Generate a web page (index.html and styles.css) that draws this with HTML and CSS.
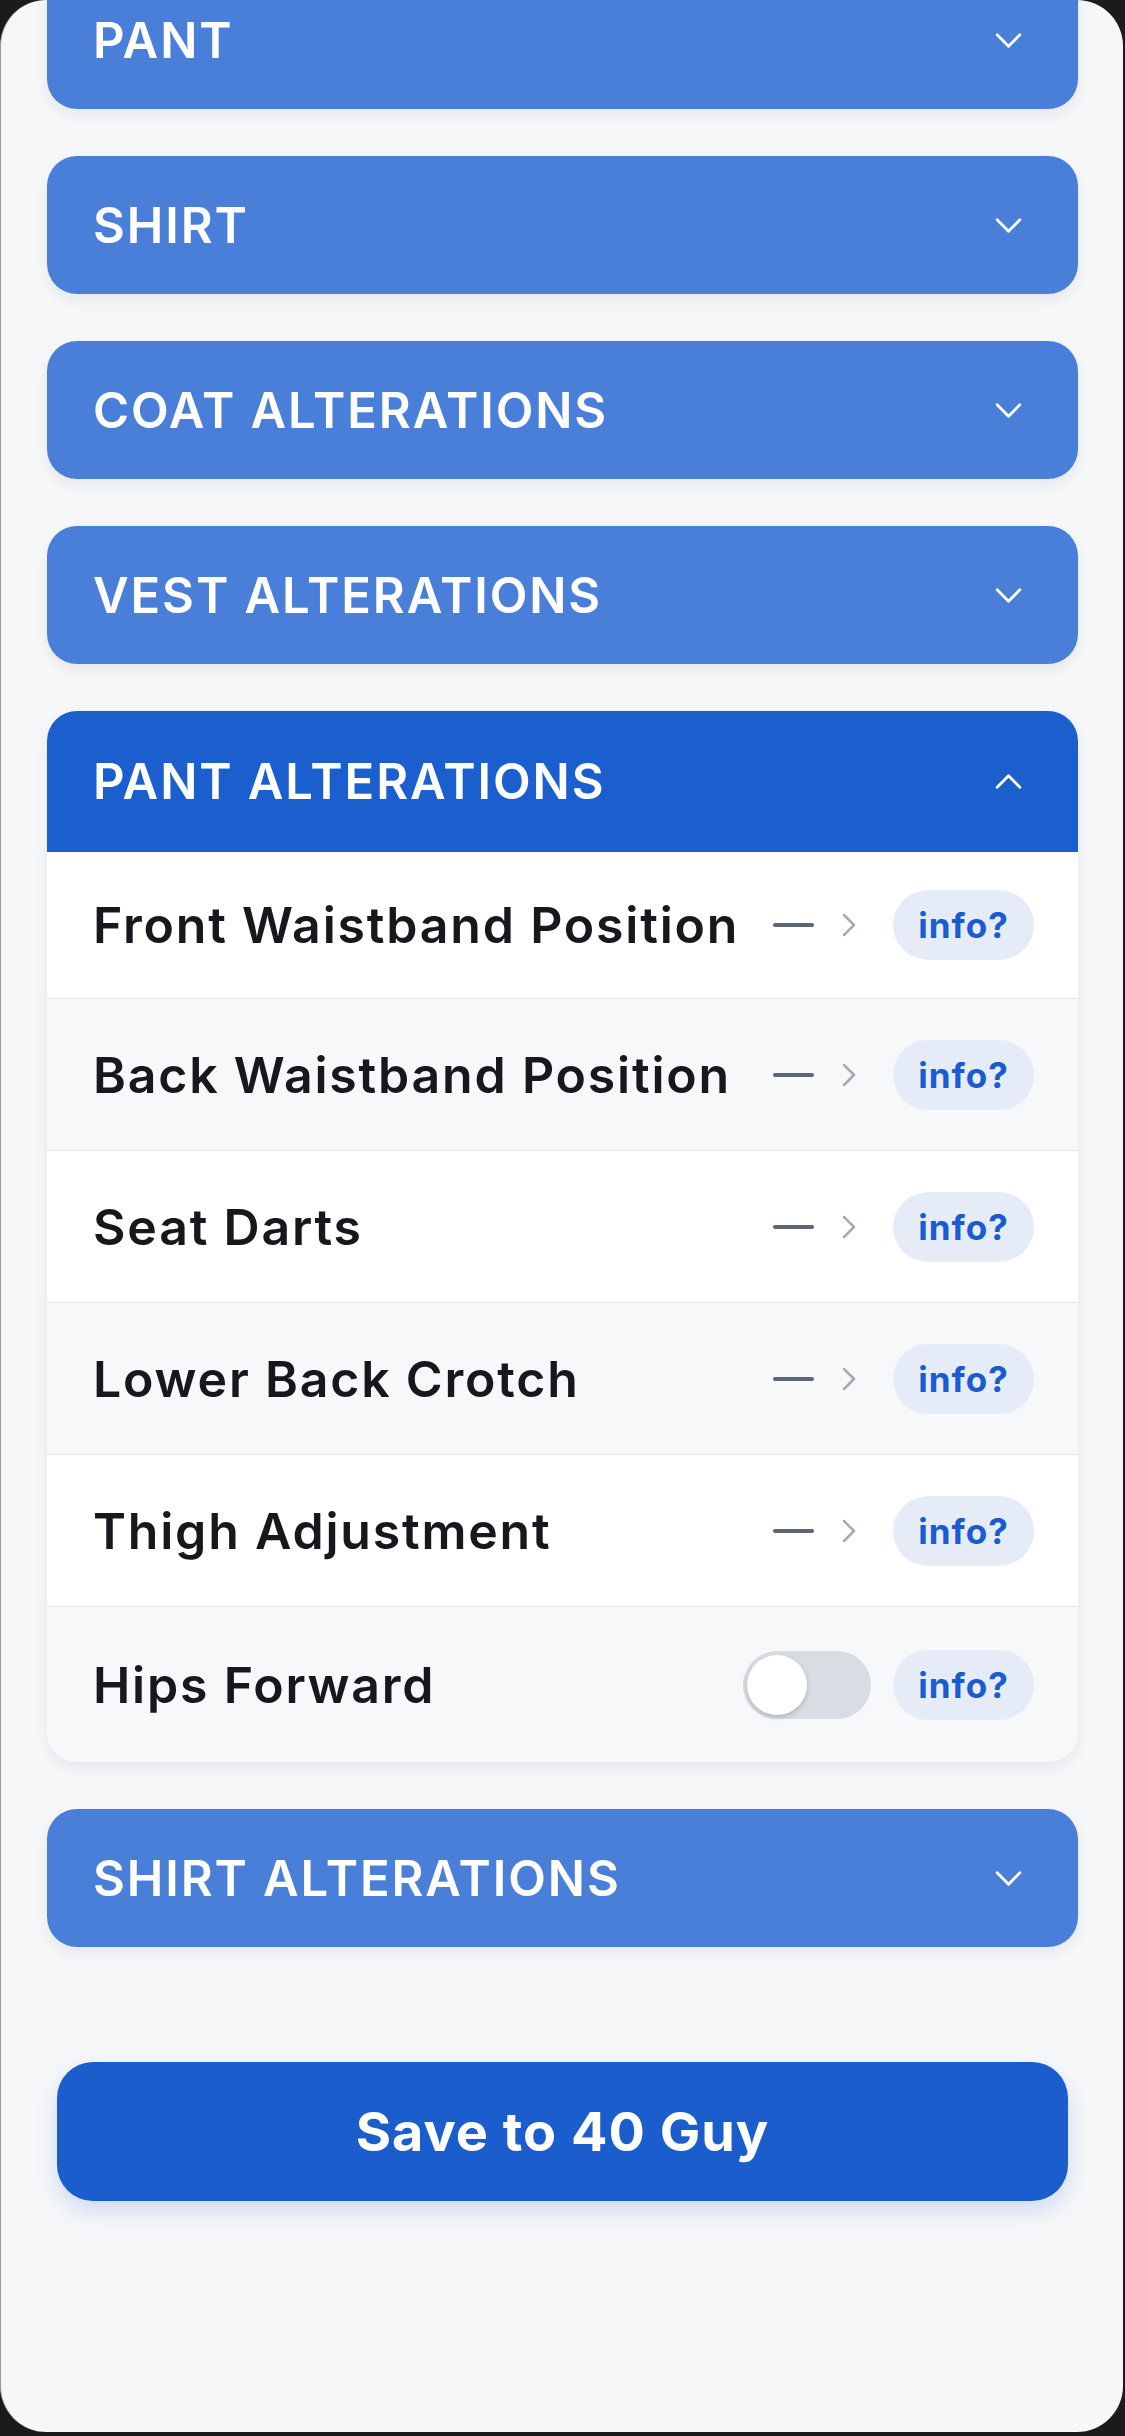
FILE: index.html
```html
<!DOCTYPE html>
<html>
  <head>
    <title>Alterations</title>
    <link rel="stylesheet" href="styles.css">
  </head>
  <body>
    <div class="screen">
      <div class="content">
        <section class="group">
          <header class="group-head">
            <span>PANT</span>
            <svg class="caret" viewBox="0 0 30 18"><polyline points="3,3 15,15 27,3" /></svg>
          </header>
        </section>

        <section class="group">
          <header class="group-head">
            <span>SHIRT</span>
            <svg class="caret" viewBox="0 0 30 18"><polyline points="3,3 15,15 27,3" /></svg>
          </header>
        </section>

        <section class="group">
          <header class="group-head">
            <span>COAT ALTERATIONS</span>
            <svg class="caret" viewBox="0 0 30 18"><polyline points="3,3 15,15 27,3" /></svg>
          </header>
        </section>

        <section class="group">
          <header class="group-head">
            <span>VEST ALTERATIONS</span>
            <svg class="caret" viewBox="0 0 30 18"><polyline points="3,3 15,15 27,3" /></svg>
          </header>
        </section>

        <section class="group open">
          <header class="group-head">
            <span>PANT ALTERATIONS</span>
            <svg class="caret" viewBox="0 0 30 18"><polyline points="3,15 15,3 27,15" /></svg>
          </header>

          <div class="row">
            <span class="row-label">Front Waistband Position</span>
            <span class="row-value">
              <span class="dash"></span>
              <svg class="next" viewBox="0 0 14 24"><polyline points="2,2 12,12 2,22" /></svg>
            </span>
            <button class="info">info?</button>
          </div>

          <div class="row">
            <span class="row-label">Back Waistband Position</span>
            <span class="row-value">
              <span class="dash"></span>
              <svg class="next" viewBox="0 0 14 24"><polyline points="2,2 12,12 2,22" /></svg>
            </span>
            <button class="info">info?</button>
          </div>

          <div class="row">
            <span class="row-label">Seat Darts</span>
            <span class="row-value">
              <span class="dash"></span>
              <svg class="next" viewBox="0 0 14 24"><polyline points="2,2 12,12 2,22" /></svg>
            </span>
            <button class="info">info?</button>
          </div>

          <div class="row">
            <span class="row-label">Lower Back Crotch</span>
            <span class="row-value">
              <span class="dash"></span>
              <svg class="next" viewBox="0 0 14 24"><polyline points="2,2 12,12 2,22" /></svg>
            </span>
            <button class="info">info?</button>
          </div>

          <div class="row">
            <span class="row-label">Thigh Adjustment</span>
            <span class="row-value">
              <span class="dash"></span>
              <svg class="next" viewBox="0 0 14 24"><polyline points="2,2 12,12 2,22" /></svg>
            </span>
            <button class="info">info?</button>
          </div>

          <div class="row">
            <span class="row-label">Hips Forward</span>
            <span class="toggle"><span class="knob"></span></span>
            <button class="info">info?</button>
          </div>
        </section>

        <section class="group">
          <header class="group-head">
            <span>SHIRT ALTERATIONS</span>
            <svg class="caret" viewBox="0 0 30 18"><polyline points="3,3 15,15 27,3" /></svg>
          </header>
        </section>

        <button class="save">Save to 40 Guy</button>
      </div>
    </div>
  </body>
</html>
```

FILE: styles.css
```css
html,
body {
  margin: 0;
  padding: 0;
}
body {
  background: #1b1b1b;
  font-family: Inter, "Noto Sans", sans-serif;
  width: 1125px;
  height: 2436px;
  overflow: hidden;
}
.screen {
  width: 1122px;
  height: 2432px;
  background: #f6f7f9;
  border-left: 1px solid #9a9a9a;
  border-radius: 46px;
  overflow: hidden;
}
/* page is scrolled a little, first card is cut off */
.content {
  margin-top: -29px;
  padding: 0 45px 0 46px;
  display: flex;
  flex-direction: column;
  gap: 47px;
}
.group {
  background: #fff;
  border-radius: 30px;
  overflow: hidden;
  box-shadow: 0 6px 14px rgba(20, 30, 50, 0.07);
}
.group-head {
  height: 138px;
  display: flex;
  align-items: center;
  justify-content: space-between;
  padding: 0 55px 0 46px;
  background: #4a7fd9;
  color: #fff;
  font-size: 49px;
  font-weight: 600;
  letter-spacing: 1.9px;
}
.open .group-head {
  height: 141px;
  background: #1b5ecd;
}
.caret {
  width: 29px;
  height: 17px;
  fill: none;
  stroke: #fff;
  stroke-width: 3;
  stroke-linecap: round;
  stroke-linejoin: round;
}
.row {
  height: 151px;
  display: flex;
  align-items: center;
  padding: 0 44px 0 46px;
  border-bottom: 1px solid #e4e7eb;
  background: #fff;
}
.row:nth-of-type(1) {
  height: 146px;
}
.row:nth-of-type(even) {
  background: #f7f8f9;
}
.row:last-child {
  height: 155px;
  border-bottom: none;
}
.row-label {
  flex: 1;
  font-size: 50px;
  font-weight: 600;
  letter-spacing: 1.8px;
  color: #16181d;
  white-space: nowrap;
}
.row-value {
  display: flex;
  align-items: center;
  margin-right: 37px;
}
.dash {
  width: 41px;
  height: 4px;
  border-radius: 2px;
  background: #5b6574;
  margin-right: 28px;
}
.next {
  width: 14px;
  height: 24px;
  fill: none;
  stroke: #a6aab1;
  stroke-width: 2.5;
  stroke-linecap: round;
  stroke-linejoin: round;
}
.toggle {
  width: 128px;
  height: 68px;
  border-radius: 34px;
  background: #d8dde4;
  margin-right: 22px;
  display: flex;
  align-items: center;
  padding: 0 4px;
  box-sizing: border-box;
}
.knob {
  width: 60px;
  height: 60px;
  border-radius: 50%;
  background: #fff;
  box-shadow: 0 2px 5px rgba(0, 0, 0, 0.2);
}
.info {
  width: 141px;
  height: 70px;
  border: none;
  border-radius: 35px;
  background: #e5ecf8;
  color: #1a5bd0;
  font-family: inherit;
  font-size: 35px;
  font-weight: 700;
  letter-spacing: 1px;
  padding: 0;
}
.save {
  margin: 68px 10px 0;
  height: 139px;
  border: none;
  border-radius: 36px;
  background: #1b5dcc;
  color: #fff;
  font-family: inherit;
  font-size: 54px;
  font-weight: 700;
  letter-spacing: 1px;
  box-shadow: 0 10px 22px rgba(27, 93, 204, 0.18);
}
```
